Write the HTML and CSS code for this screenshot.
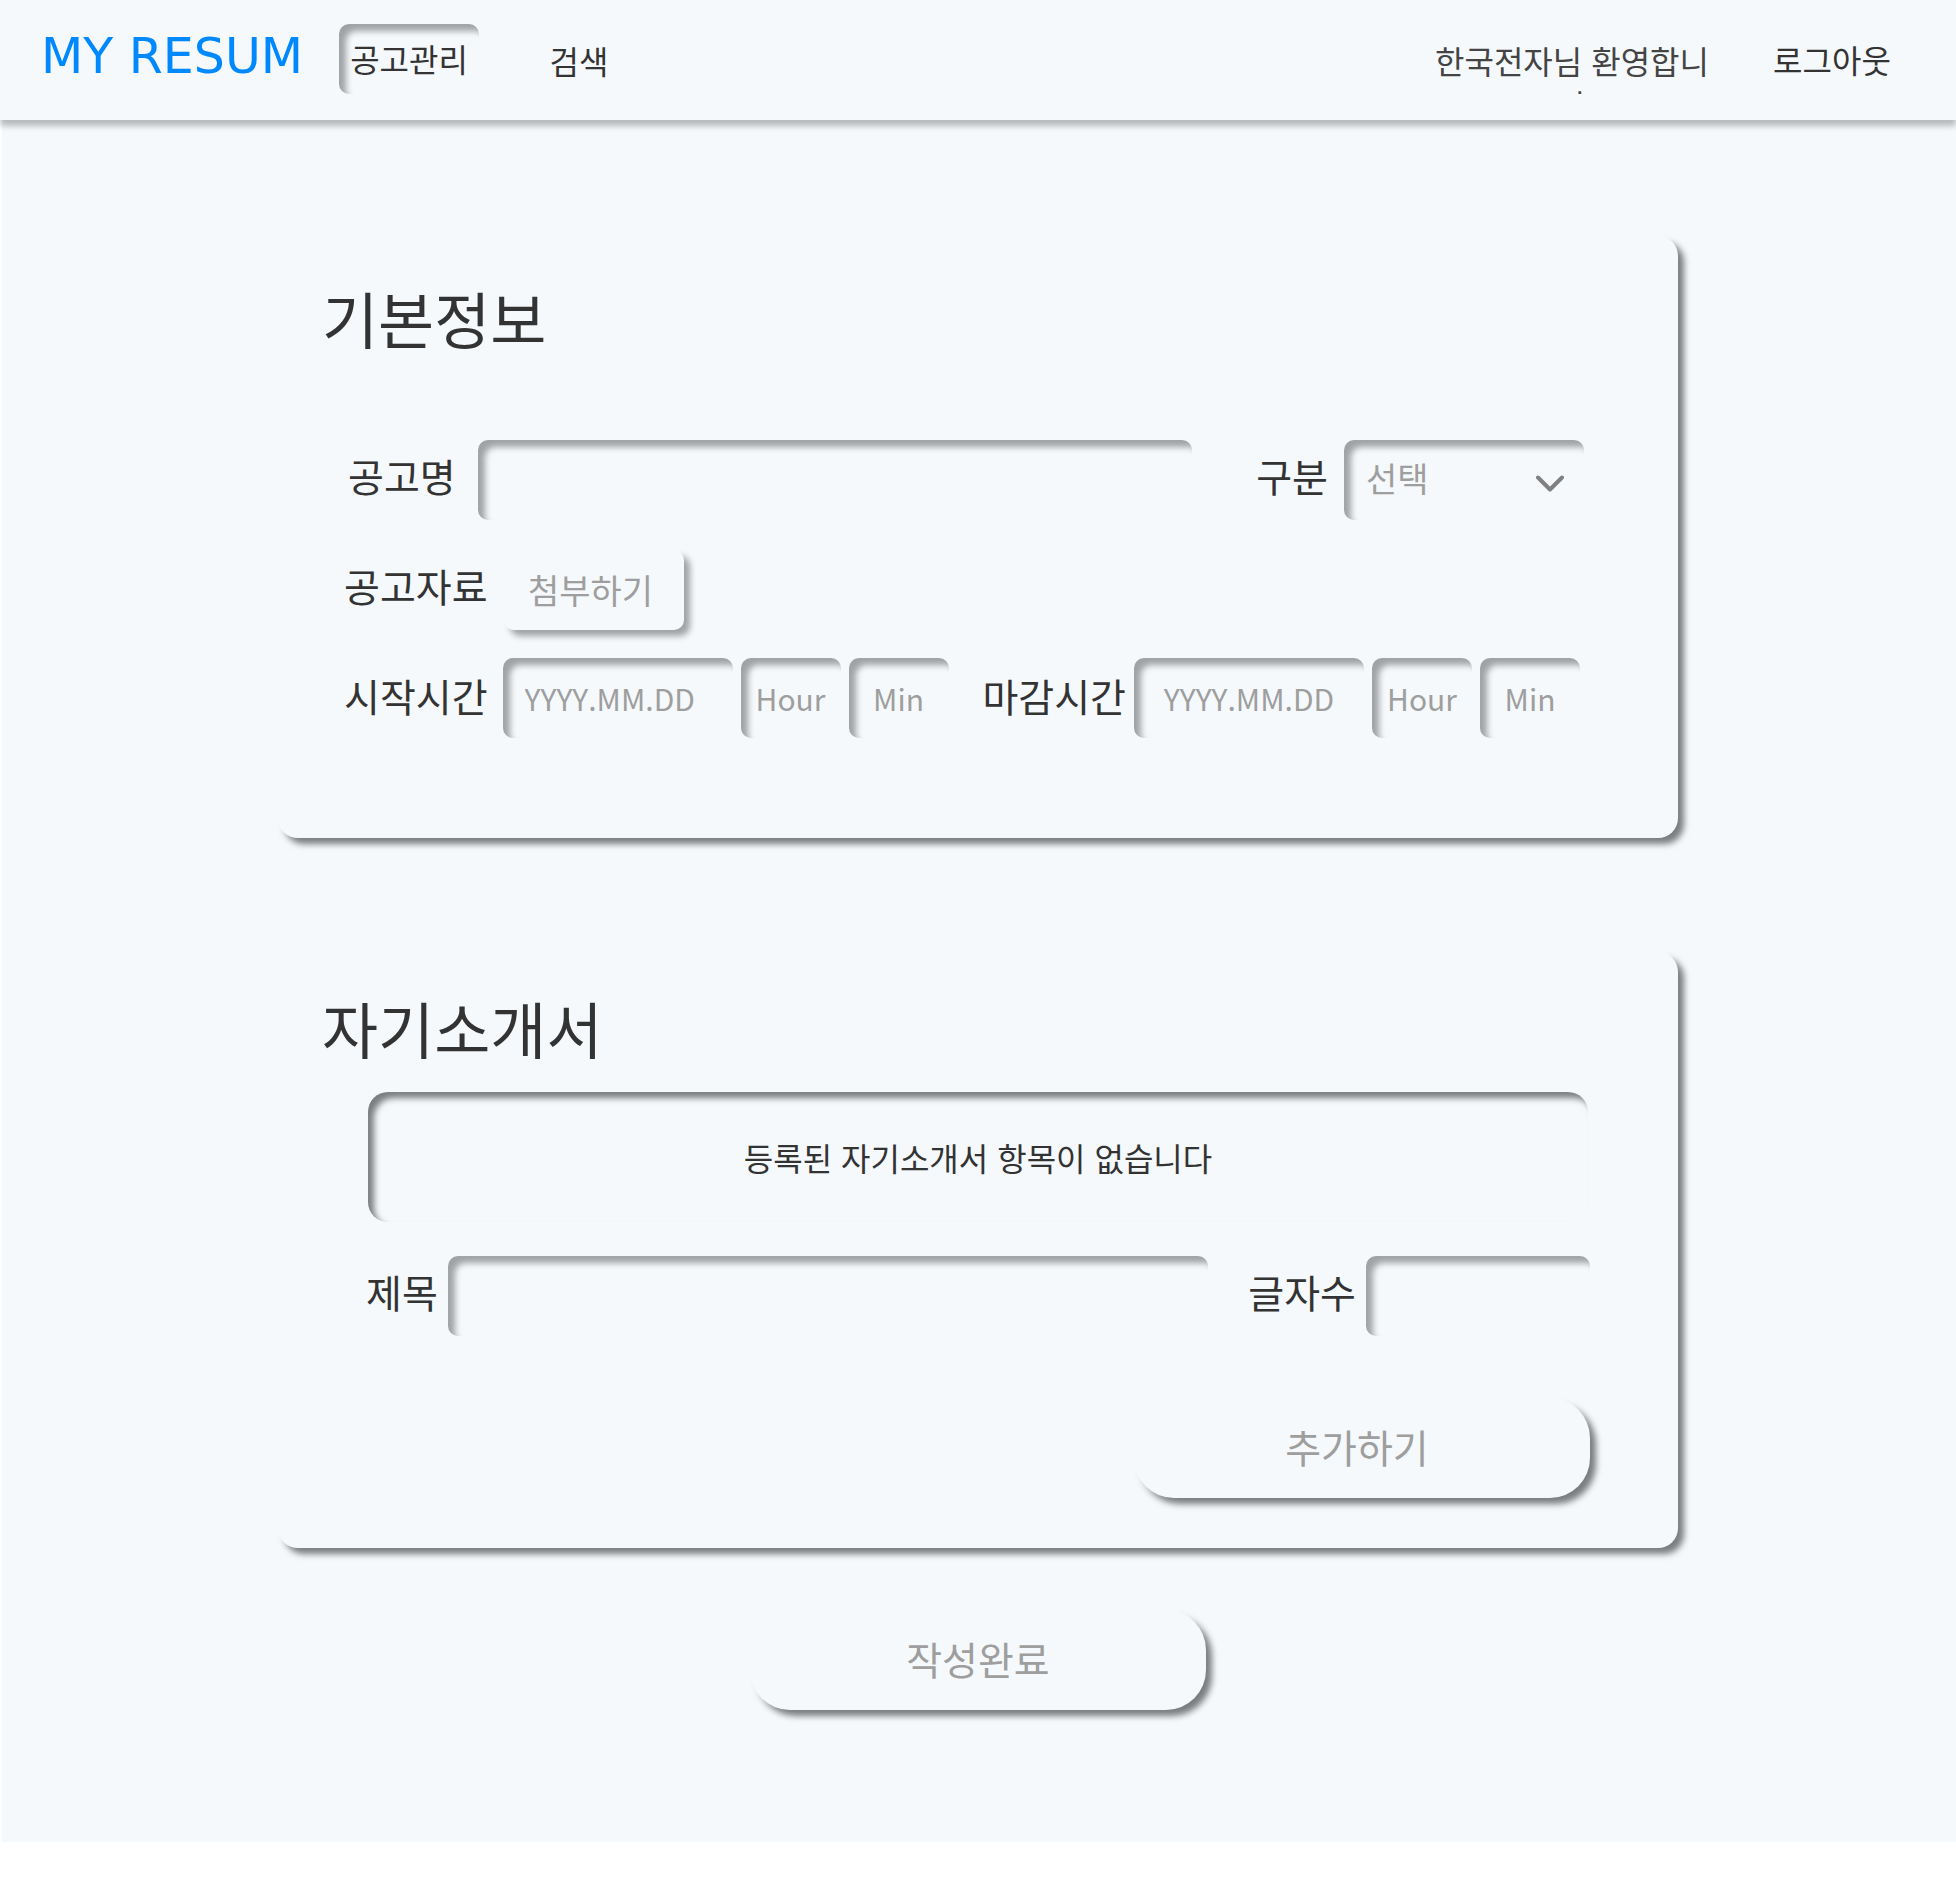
FILE: index.html
```html
<!DOCTYPE html>
<html lang="ko">
<head>
<meta charset="utf-8">
<meta name="viewport" content="width=device-width, initial-scale=1">
<title>MY RESUM - 공고관리</title>
<link rel="stylesheet" href="styles.css">
</head>
<body>
<header class="header">
  <a class="logo" href="#">MY RESUM</a>
  <nav class="nav">
    <a class="nav-item nav-item-active" href="#">공고관리</a>
    <a class="nav-item nav-item-low" href="#">검색</a>
  </nav>
  <p class="greeting">한국전자님 환영합니다</p>
  <button class="nav-item" type="button">로그아웃</button>
</header>
<main class="page">
  <form class="form">
    <section class="card">
      <h2 class="card-title">기본정보</h2>
      <div class="row row-name">
        <label class="label" for="name">공고명</label>
        <input class="field grow" id="name" type="text">
        <label class="label label-second" for="kind">구분</label>
        <div class="select-wrap">
          <select class="field select" id="kind"><option>선택</option></select>
          <svg class="chevron" viewBox="0 0 28 17" aria-hidden="true"><path d="M2 2.500L14 14.500L26 2.500"/></svg>
        </div>
      </div>
      <div class="row row-file">
        <label class="label" for="file">공고자료</label>
        <button class="attach" id="file" type="button">첨부하기</button>
      </div>
      <div class="row row-time">
        <div class="time">
          <label class="label" for="start">시작시간</label>
          <input class="field date date-start" id="start" type="text" placeholder="YYYY.MM.DD">
          <input class="field short" type="text" placeholder="Hour" aria-label="시작 시">
          <input class="field short" type="text" placeholder="Min" aria-label="시작 분">
        </div>
        <div class="time">
          <label class="label" for="end">마감시간</label>
          <input class="field date" id="end" type="text" placeholder="YYYY.MM.DD">
          <input class="field short" type="text" placeholder="Hour" aria-label="마감 시">
          <input class="field short" type="text" placeholder="Min" aria-label="마감 분">
        </div>
      </div>
    </section>
    <section class="card card-intro">
      <h2 class="card-title">자기소개서</h2>
      <p class="empty">등록된 자기소개서 항목이 없습니다</p>
      <div class="row row-item">
        <label class="label" for="title">제목</label>
        <input class="field grow" id="title" type="text">
        <label class="label label-count" for="count">글자수</label>
        <input class="field count" id="count" type="text">
      </div>
      <button class="pill pill-add" type="button">추가하기</button>
    </section>
    <button class="pill" type="submit">작성완료</button>
  </form>
</main>
</body>
</html>
```
FILE: styles.css
```css
:root {
  --bg: #f5f9fc;
  --text: #333;
  --muted: #9e9e9e;
  --inset: inset 7px 7px 6px rgba(0, 0, 0, 0.35);
  --raised: -6px -6px 6px var(--bg), 6px 6px 6px rgba(0, 0, 0, 0.5);
}

* {
  box-sizing: border-box;
}

body {
  margin: 0;
  background: #fff;
  color: var(--text);
  font-family: "Noto Sans CJK KR", sans-serif;
  font-size: 32px;
}

button,
input,
select {
  margin: 0;
  border: 0;
  background: var(--bg);
  color: inherit;
  font: inherit;
}

/* Header */

.header {
  position: relative;
  display: flex;
  align-items: center;
  height: 120px;
  padding: 0 54px 2px 41px;
  background: var(--bg);
  box-shadow: 0 6px 6px rgba(0, 0, 0, 0.25);
}

.logo {
  padding-bottom: 4px;
  color: #0089ff;
  font-family: "DejaVu Sans", sans-serif;
  font-size: 49px;
  line-height: 60px;
  text-decoration: none;
  white-space: nowrap;
}

.nav {
  display: flex;
  gap: 30px;
  margin: 0 auto 0 36px;
}

.nav-item {
  width: 140px;
  height: 70px;
  padding: 0;
  border-radius: 10px;
  color: var(--text);
  line-height: 68px;
  text-align: center;
  text-decoration: none;
  white-space: nowrap;
}

.nav-item-active {
  box-shadow: var(--inset);
}

.nav-item-low {
  padding-top: 2px;
}

.greeting {
  width: 280px;
  height: 70px;
  margin: 0 50px 0 0;
  padding-top: 14px;
  overflow: hidden;
  color: #444;
  line-height: 44px;
  text-align: center;
  word-break: break-all;
}

/* Page */

.page {
  margin-left: 2px;
  padding: 116px 0 132px;
  background: var(--bg);
}

.form {
  display: flex;
  flex-direction: column;
  align-items: center;
  margin-left: -2px;
}

.card {
  width: 100%;
  max-width: 1400px;
  padding: 38px 94px 100px 44px;
  border-radius: 20px;
  background: var(--bg);
  box-shadow: var(--raised);
}

.card-title {
  margin: 0;
  font-size: 61px;
  font-weight: 400;
  line-height: 88px;
}

.row {
  display: flex;
  align-items: center;
}

.label {
  padding-bottom: 10px;
  font-size: 39px;
  line-height: 58px;
  white-space: nowrap;
}

.field {
  min-width: 0;
  height: 80px;
  padding: 0 22px;
  border-radius: 10px;
  box-shadow: var(--inset);
}

.field::placeholder {
  color: var(--muted);
  opacity: 1;
}

.grow {
  flex: 1;
}

/* Basic information */

.row-name {
  gap: 22px;
  margin-top: 78px;
  padding-left: 26px;
}

.label-second {
  margin: 0 -6px 0 42px;
}

.select-wrap {
  position: relative;
  width: 240px;
}

.select {
  width: 100%;
  padding-bottom: 6px;
  appearance: none;
  color: var(--muted);
  font-size: 34px;
}

.chevron {
  position: absolute;
  top: 35px;
  right: 20px;
  width: 28px;
  height: 17px;
  fill: none;
  stroke: #808080;
  stroke-width: 4;
  stroke-linecap: round;
  stroke-linejoin: round;
  pointer-events: none;
}

.row-file {
  gap: 16px;
  margin-top: 30px;
  padding-left: 22px;
}

.attach {
  width: 180px;
  height: 80px;
  padding: 0 6px 2px 0;
  border-radius: 10px;
  box-shadow: -6px -6px 6px var(--bg), 6px 6px 6px rgba(0, 0, 0, 0.35);
  color: var(--muted);
  font-size: 34px;
}

.row-time {
  justify-content: space-between;
  margin-top: 28px;
  padding: 0 4px 0 22px;
}

.time {
  display: flex;
  align-items: center;
  gap: 8px;
}

.time .label {
  padding-bottom: 6px;
}

.time .field {
  font-size: 30px;
}

.date {
  width: 230px;
  text-align: center;
}

.date-start {
  margin-left: 7px;
  text-align: left;
}

.short {
  width: 100px;
  padding: 0;
  text-align: center;
}

/* Cover letter */

.card-intro {
  margin: 114px 0 62px;
  padding: 32px 88px 50px 44px;
}

.empty {
  margin: 20px 2px 0 46px;
  border-radius: 20px;
  box-shadow: inset 6px 6px 6px rgba(0, 0, 0, 0.5);
  line-height: 130px;
  text-align: center;
}

.row-item {
  gap: 10px;
  margin-top: 34px;
  padding-left: 44px;
}

.label-count {
  margin-left: 30px;
}

.count {
  width: 224px;
}

.pill {
  width: 456px;
  height: 100px;
  padding: 0 0 4px;
  border-radius: 40px;
  box-shadow: var(--raised);
  color: var(--muted);
  font-size: 39px;
}

.pill-add {
  display: block;
  margin: 62px 0 0 auto;
  padding-right: 10px;
}
```
